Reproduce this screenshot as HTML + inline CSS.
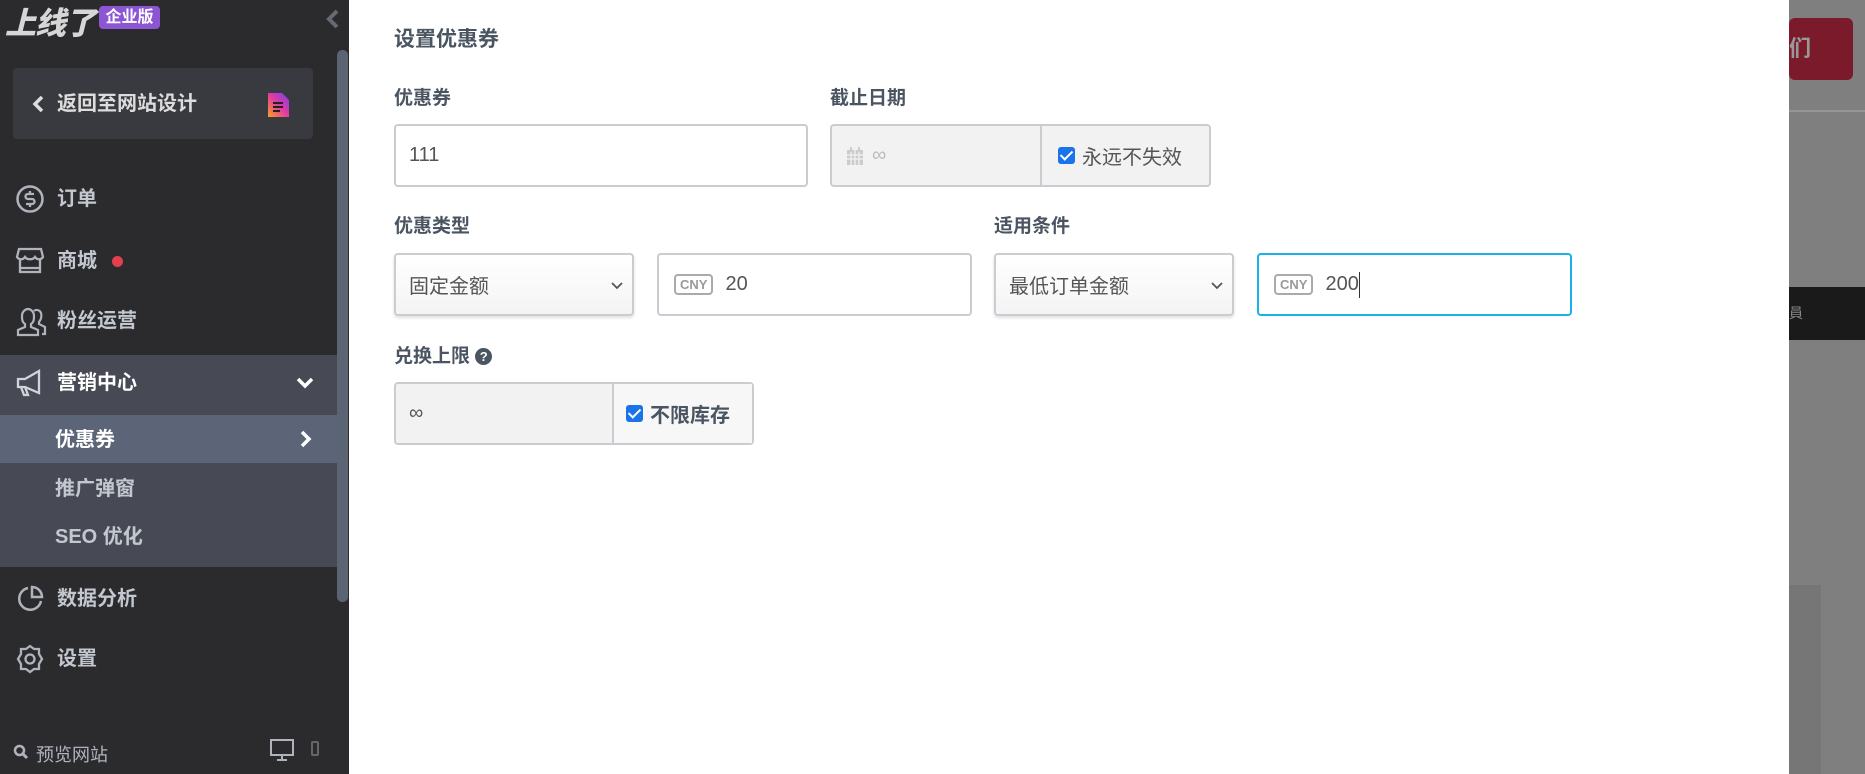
<!DOCTYPE html>
<html><head><meta charset="utf-8"><style>
*{box-sizing:border-box;margin:0;padding:0}
body{width:1865px;height:774px;overflow:hidden;background:#7f7f7f;font-family:"Liberation Sans","Noto Sans CJK SC",sans-serif;position:relative}
.sb{position:absolute;left:0;top:0;width:349px;height:774px;background:#2b2b2e;color:#c3c7cf}
.abs{position:absolute}
.mi{position:absolute;left:57px;font-size:20px;font-weight:bold;line-height:24px;color:#c3c7cf}
.ic{position:absolute;left:15px}
.modal{position:absolute;left:349px;top:0;width:1440px;height:774px;background:#fff}
.lbl{position:absolute;font-size:19px;font-weight:bold;color:#4b5562;line-height:24px}
.box{position:absolute;border:2px solid #c9ccd0;border-radius:4px;background:#fff;font-size:20px;color:#555;display:flex;align-items:center}
.sel{background:linear-gradient(#fff,#f4f4f4);box-shadow:0 2px 3px rgba(0,0,0,.12)}
.cny{border:2px solid #aaa;border-radius:4px;font-size:13px;font-weight:bold;color:#999;padding:0 4px;line-height:17px;margin-right:12px}
.chk{width:17px;height:17px;background:#1a73e8;border-radius:3px;display:inline-block;position:relative;margin-right:7px}
.chk:after{content:"";position:absolute;left:5px;top:1px;width:5px;height:10px;border:solid #fff;border-width:0 2.5px 2.5px 0;transform:rotate(45deg)}
</style></head><body>
<!-- right overlay bits -->
<div class="abs" style="left:1789px;top:18px;width:64px;height:62px;background:#7b1a2b;border-radius:6px;color:#999;font-size:22px;font-weight:bold;line-height:62px">们</div>
<div class="abs" style="left:1789px;top:110px;width:76px;height:2px;background:#959595"></div>
<div class="abs" style="left:1789px;top:287px;width:76px;height:53px;background:#1a1a1a;color:#888;font-size:14px;line-height:53px">員</div>
<div class="abs" style="left:1789px;top:585px;width:32px;height:189px;background:#767676"></div>

<div class="sb">
  <div class="abs" style="left:5px;top:-2px;font-size:31px;font-weight:900;font-style:italic;color:#d6d6d6;letter-spacing:-1px">上线了</div>
  <div class="abs" style="left:99px;top:6px;width:61px;height:23px;background:#8b55d4;border-radius:4px;color:#fff;font-size:16px;font-weight:bold;text-align:center;line-height:23px">企业版</div>
  <svg class="abs" style="left:326px;top:9px" width="14" height="20"><path d="M11 2 L3 10 L11 18" stroke="#666a72" stroke-width="4" fill="none"/></svg>
  <div class="abs" style="left:337px;top:50px;width:11px;height:552px;background:#5b6473;border-radius:5px"></div>
  <div class="abs" style="left:13px;top:68px;width:300px;height:71px;background:#393a3f;border-radius:4px"></div>
  <svg class="abs" style="left:32px;top:95px" width="14" height="18"><path d="M10 2 L3 9 L10 16" stroke="#ddd" stroke-width="3.5" fill="none"/></svg>
  <div class="mi" style="left:57px;top:92px;color:#dcdcdc">返回至网站设计</div>
  <svg class="abs" style="left:268px;top:93px" width="22" height="24"><defs><linearGradient id="g" x1="0" y1="1" x2="1" y2="0"><stop offset="0" stop-color="#f7a31c"/><stop offset=".5" stop-color="#e33ba0"/><stop offset="1" stop-color="#7a3cf0"/></linearGradient></defs><path d="M0 0h14l7 7v17H0z" fill="url(#g)"/><path d="M5 10h10M5 14h10M5 18h7" stroke="#222" stroke-width="2"/></svg>

  <svg class="ic" style="top:184px" width="30" height="30"><circle cx="15" cy="15" r="12.5" stroke="#aeb3bc" stroke-width="2.5" fill="none"/><path d="M19 10h-6a2.5 2.5 0 0 0 0 5h4a2.5 2.5 0 0 1 0 5h-6M15 7v3M15 20v3" stroke="#aeb3bc" stroke-width="2.3" fill="none"/></svg>
  <div class="mi" style="top:187px">订单</div>
  <svg class="ic" style="top:246px" width="30" height="30"><path d="M4 3h22l2 8c-2 3-6 3-8 0-2 3-8 3-10 0-2 3-6 3-8 0zM5 13v13h20V13M5 22h20" stroke="#aeb3bc" stroke-width="2.3" fill="none"/></svg>
  <div class="mi" style="top:249px">商城</div>
  <div class="abs" style="left:112px;top:256px;width:11px;height:11px;border-radius:50%;background:#e2404e"></div>
  <svg class="ic" style="top:307px" width="32" height="30"><path d="M3 28v-5l7-3v-3c-3-2-3-5-3-8 0-4 3-7 6-7s6 3 6 7c0 3 0 6-3 8v3l7 3v5zM19 4c2-2 6-1 7 2s0 7-2 9v2l6 3v7h-3" stroke="#aeb3bc" stroke-width="2.2" fill="none"/></svg>
  <div class="mi" style="top:309px">粉丝运营</div>

  <div class="abs" style="left:0;top:355px;width:337px;height:212px;background:#474a54"></div>
  <svg class="ic" style="top:369px" width="30" height="28"><path d="M3 10h7l14-8v22L10 18H3zM10 18l3 8h-4l-3-8" stroke="#d0d3d9" stroke-width="2.3" fill="none"/></svg>
  <div class="mi" style="top:371px;color:#fff">营销中心</div>
  <svg class="abs" style="left:296px;top:377px" width="18" height="12"><path d="M2 2l7 7 7-7" stroke="#fff" stroke-width="3.5" fill="none"/></svg>
  <div class="abs" style="left:0;top:415px;width:337px;height:48px;background:#5b6577"></div>
  <div class="mi" style="left:55px;top:428px;color:#fff">优惠券</div>
  <svg class="abs" style="left:300px;top:430px" width="12" height="18"><path d="M2 2l7 7-7 7" stroke="#fff" stroke-width="3.5" fill="none"/></svg>
  <div class="mi" style="left:55px;top:477px">推广弹窗</div>
  <div class="mi" style="left:55px;top:525px">SEO 优化</div>

  <svg class="ic" style="top:584px" width="30" height="30"><path d="M13 4A11 11 0 1 0 26 17" stroke="#aeb3bc" stroke-width="2.5" fill="none"/><path d="M17 3a10 10 0 0 1 10 10H17z" stroke="#aeb3bc" stroke-width="2.5" fill="none"/></svg>
  <div class="mi" style="top:587px">数据分析</div>
  <svg class="ic" style="top:644px" width="30" height="30"><path d="M15 2l4 3h5v5l3 5-3 5v5h-5l-4 3-4-3H6v-5l-3-5 3-5V5h5z" stroke="#aeb3bc" stroke-width="2.3" fill="none"/><circle cx="15" cy="15" r="4.5" stroke="#aeb3bc" stroke-width="2.3" fill="none"/></svg>
  <div class="mi" style="top:647px">设置</div>

  <svg class="abs" style="left:13px;top:744px" width="16" height="16"><circle cx="6.5" cy="6.5" r="4.5" stroke="#aeb3bc" stroke-width="2.5" fill="none"/><path d="M10 10l4 4" stroke="#aeb3bc" stroke-width="3"/></svg>
  <div class="abs" style="left:36px;top:741px;font-size:18px;color:#aeb3bc">预览网站</div>
  <svg class="abs" style="left:269px;top:738px" width="26" height="24"><rect x="2" y="2" width="22" height="15" stroke="#aeb3bc" stroke-width="2" fill="none"/><path d="M13 17v4M8 22h10" stroke="#aeb3bc" stroke-width="2"/></svg>
  <div class="abs" style="left:311px;top:741px;width:8px;height:15px;border:2px solid #666;border-radius:2px"></div>
</div>

<div class="modal">
  <div class="lbl" style="left:45px;top:28px;font-size:21px">设置优惠券</div>
  <div class="lbl" style="left:45px;top:87px">优惠券</div>
  <div class="box" style="left:45px;top:124px;width:414px;height:63px;padding-left:13px">111</div>
  <div class="lbl" style="left:481px;top:87px">截止日期</div>
  <div class="box" style="left:481px;top:124px;width:381px;height:63px;background:#f2f2f2;color:#bbb">
    <svg style="margin-left:14px;margin-right:8px" width="18" height="20"><rect x="1" y="4" width="16" height="15" fill="#ccc"/><path d="M1 9h16M1 13h16M5 4v15M9 4v15M13 4v15" stroke="#f2f2f2" stroke-width="1.3"/><rect x="4" y="1" width="2" height="5" fill="#ccc"/><rect x="12" y="1" width="2" height="5" fill="#ccc"/></svg>∞
    <div style="position:absolute;left:208px;top:0;bottom:0;border-left:2px solid #c9ccd0;display:flex;align-items:center;padding-left:16px;color:#555;font-size:20px"><span class="chk"></span>永远不失效</div>
  </div>
  <div class="lbl" style="left:45px;top:215px">优惠类型</div>
  <div class="box sel" style="left:45px;top:253px;width:240px;height:63px;padding-left:13px">固定金额
    <svg style="position:absolute;right:8px;top:26px" width="14" height="10"><path d="M2 2l5 5 5-5" stroke="#555" stroke-width="1.8" fill="none"/></svg></div>
  <div class="box" style="left:308px;top:253px;width:315px;height:63px;padding-left:15px"><span class="cny">CNY</span>20</div>
  <div class="lbl" style="left:645px;top:215px">适用条件</div>
  <div class="box sel" style="left:645px;top:253px;width:240px;height:63px;padding-left:13px">最低订单金额
    <svg style="position:absolute;right:8px;top:26px" width="14" height="10"><path d="M2 2l5 5 5-5" stroke="#555" stroke-width="1.8" fill="none"/></svg></div>
  <div class="box" style="left:908px;top:253px;width:315px;height:63px;padding-left:15px;border-color:#1ab0e8"><span class="cny">CNY</span>200<span style="display:inline-block;width:1px;height:26px;background:#333"></span></div>
  <div class="lbl" style="left:45px;top:345px">兑换上限 <span style="display:inline-block;width:17px;height:17px;border-radius:50%;background:#4b5562;color:#fff;font-size:13px;text-align:center;line-height:17px;vertical-align:1px">?</span></div>
  <div class="box" style="left:45px;top:382px;width:360px;height:63px;background:#f2f2f2;padding-left:13px">∞
    <div style="position:absolute;left:216px;top:0;bottom:0;right:0;background:#f7f7f7;border-left:2px solid #c9ccd0;display:flex;align-items:center;padding-left:12px;font-weight:bold;color:#4b5562;font-size:20px"><span class="chk"></span>不限库存</div>
  </div>
</div>
</body></html>
